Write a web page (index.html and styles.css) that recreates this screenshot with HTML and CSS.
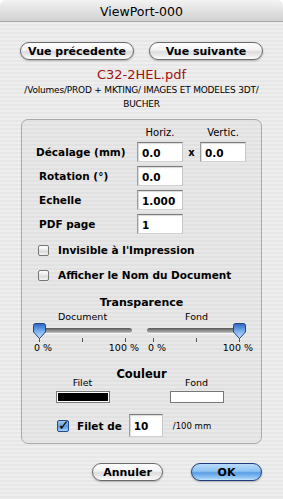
FILE: index.html
```html
<!DOCTYPE html>
<html>
<head>
  <meta name="viewport" content="width=device-width, initial-scale=1">
  <link rel="stylesheet" href="styles.css">
</head>
<body>

<div class="window">
  <div class="titlebar">ViewPort-000</div>

  <div class="panel">
    <div class="nav-buttons">
      <button class="aqua">Vue précedente</button>
      <button class="aqua">Vue suivante</button>
    </div>

    <div class="filename">C32-2HEL.pdf</div>
    <div class="path">/Volumes/PROD + MKTING/ IMAGES ET MODELES 3DT/<br>BUCHER</div>

    <div class="group">
      <div class="fields">
        <span></span><span class="col-head">Horiz.</span><span></span><span class="col-head">Vertic.</span>

        <label class="first">Décalage (mm)</label>
        <input class="field" value="0.0">
        <span class="times">x</span>
        <input class="field" value="0.0">

        <label>Rotation (°)</label>
        <input class="field" value="0.0">
        <span></span><span></span>

        <label>Echelle</label>
        <input class="field" value="1.000">
        <span></span><span></span>

        <label>PDF page</label>
        <input class="field" value="1">
        <span></span><span></span>
      </div>

      <div class="checks">
        <div class="check-row"><span class="box"></span>Invisible à l'Impression</div>
        <div class="check-row"><span class="box"></span>Afficher le Nom du Document</div>
      </div>

      <div class="section-title">Transparence</div>
      <div class="pair">
        <div class="slider">
          <div class="small-label">Document</div>
          <div class="track">
            <svg class="thumb left" width="13" height="17" viewBox="0 0 13 17">
              <defs>
                <linearGradient id="tg1" x1="0" y1="0" x2="0" y2="1">
                  <stop offset="0" stop-color="#2a62c4"/>
                  <stop offset="0.45" stop-color="#6ea6ea"/>
                  <stop offset="1" stop-color="#cde6fb"/>
                </linearGradient>
              </defs>
              <path d="M2.5 0.5 H10.5 Q12.5 0.5 12.5 2.5 V9 L6.5 15.5 L0.5 9 V2.5 Q0.5 0.5 2.5 0.5 Z" fill="url(#tg1)" stroke="#24457e" stroke-width="1"/>
            </svg>
          </div>
          <div class="ticks"><i></i><i></i><i></i></div>
          <div class="ends"><span>0 %</span><span>100 %</span></div>
        </div>
        <div class="slider">
          <div class="small-label">Fond</div>
          <div class="track">
            <svg class="thumb right" width="13" height="17" viewBox="0 0 13 17">
              <path d="M2.5 0.5 H10.5 Q12.5 0.5 12.5 2.5 V9 L6.5 15.5 L0.5 9 V2.5 Q0.5 0.5 2.5 0.5 Z" fill="url(#tg1)" stroke="#24457e" stroke-width="1"/>
            </svg>
          </div>
          <div class="ticks"><i></i><i></i><i></i></div>
          <div class="ends"><span>0 %</span><span>100 %</span></div>
        </div>
      </div>

      <div class="section-title couleur">Couleur</div>
      <div class="pair">
        <div class="swatch-col">
          <div class="small-label">Filet</div>
          <div class="swatch black"></div>
        </div>
        <div class="swatch-col">
          <div class="small-label">Fond</div>
          <div class="swatch white"></div>
        </div>
      </div>

      <div class="filet-row">
        <span class="box checked">&#10003;</span>
        <span class="filet-label">Filet de</span>
        <input class="field wide" value="10">
        <span class="unit">/100 mm</span>
      </div>
    </div>

    <div class="dialog-buttons">
      <button class="aqua">Annuler</button>
      <button class="aqua default">OK</button>
    </div>
  </div>
</div>

</body>
</html>
```

FILE: styles.css
```css
body {
  margin: 0;
  background: #fff;
  font-family: "DejaVu Sans", sans-serif;
  color: #000;
}

.window {
  width: 283px;
  height: 499px;
  border-radius: 6px 6px 0 0;
  overflow: hidden;
  display: flex;
  flex-direction: column;
}

.titlebar {
  height: 22px;
  line-height: 23px;
  text-align: center;
  font-size: 12.5px;
  background: linear-gradient(#f3f3f3, #dedede 60%, #d2d2d2);
  border-bottom: 1px solid #a8a8a8;
  box-sizing: border-box;
}

.panel {
  flex: 1;
  padding: 20px 21px 0 21px;
  background: repeating-linear-gradient(#eeeeee 0, #eeeeee 2px, #e7e7e7 2px, #e7e7e7 4px);
}

/* aqua buttons */
.aqua {
  font-family: "DejaVu Sans", sans-serif;
  font-weight: bold;
  font-size: 11px;
  height: 18px;
  padding: 0;
  border: 1px solid #6a6a6a;
  border-radius: 9px;
  background: linear-gradient(#ffffff, #f2f2f2 45%, #dcdcdc 55%, #f4f4f4 90%, #ffffff);
  box-shadow: 0 1px 2px rgba(0, 0, 0, 0.25);
  color: #000;
}

.aqua.default {
  border-color: #1d3c7c;
  background: linear-gradient(#b9dbfa, #8ec2f2 45%, #5a9ce6 55%, #9ccdf7 90%, #cfe9fd);
}

.nav-buttons {
  display: flex;
  justify-content: space-between;
  margin: 0 -1px;
}

.nav-buttons .aqua {
  width: 114px;
}

.filename {
  margin-top: 7px;
  text-align: center;
  color: #a01010;
  font-size: 13px;
  line-height: 16px;
}

.path {
  margin: 0 -20px;
  text-align: center;
  white-space: nowrap;
  font-size: 9px;
  letter-spacing: -0.2px;
  line-height: 14px;
}

/* group box */
.group {
  margin-top: 8px;
  height: 325px;
  box-sizing: border-box;
  border: 1px solid #a9a9a9;
  border-radius: 7px;
  background: rgba(0, 0, 0, 0.025);
  padding: 6px 0 0 0;
}

.fields {
  display: grid;
  grid-template-columns: 101px 46px 17px 46px;
  row-gap: 4px;
  padding-left: 14px;
  align-items: center;
}

.col-head {
  font-size: 10px;
  text-align: center;
  line-height: 13px;
  margin-bottom: -1px;
}

.fields label {
  font-weight: bold;
  font-size: 10.5px;
  padding-left: 3px;
}

.fields label.first {
  padding-left: 0;
}

.times {
  font-weight: bold;
  font-size: 10px;
  text-align: center;
}

.field {
  box-sizing: border-box;
  width: 46px;
  height: 20px;
  padding: 1px 0 0 4px;
  border: 1px solid #9c9c9c;
  border-top-color: #7b7b7b;
  border-right-color: #c6c6c6;
  border-bottom-color: #d0d0d0;
  box-shadow: inset 1px 1px 1px rgba(0, 0, 0, 0.15);
  background: #fff;
  font-family: "DejaVu Sans", sans-serif;
  font-weight: bold;
  font-size: 10.5px;
  color: #000;
}

.checks {
  margin-top: 9px;
  padding-left: 16px;
  display: flex;
  flex-direction: column;
  gap: 10px;
}

.check-row {
  display: flex;
  align-items: center;
  gap: 9px;
  font-weight: bold;
  font-size: 10.5px;
  line-height: 15px;
}

.box {
  width: 11px;
  height: 11px;
  box-sizing: border-box;
  border: 1px solid #777;
  border-radius: 2px;
  background: linear-gradient(#ffffff, #e6e6e6 50%, #d6d6d6 55%, #f6f6f6);
  flex: none;
}

.box.checked {
  border-color: #244a8c;
  background: linear-gradient(#9cc9f4, #5e9de3 55%, #a5d2f8);
  font-size: 14px;
  line-height: 8px;
  font-weight: bold;
  color: #000;
  overflow: visible;
}

.section-title {
  margin-top: 13px;
  text-align: center;
  font-weight: bold;
  font-size: 11px;
  line-height: 14px;
}

.pair {
  display: flex;
  gap: 15px;
  padding-left: 11px;
}

.slider {
  width: 99px;
}

.small-label {
  font-size: 9.5px;
  text-align: center;
  line-height: 13px;
}

.track {
  position: relative;
  margin-top: 5px;
  height: 5px;
  border-radius: 3px;
  background: linear-gradient(#555, #8a8a8a 50%, #c4c4c4);
  box-shadow: 0 1px 0 rgba(255, 255, 255, 0.8);
}

.thumb {
  position: absolute;
  top: -5px;
}

.thumb.left {
  left: 0;
}

.thumb.right {
  right: 0;
}

.ticks {
  display: flex;
  justify-content: space-between;
  padding: 0 6px;
  margin-top: 5px;
}

.ticks i {
  width: 1px;
  height: 4px;
  background: #555;
}

.ends {
  display: flex;
  justify-content: space-between;
  margin: 0 -7px 0 1px;
  font-size: 9.5px;
  line-height: 12px;
}

.couleur {
  margin-top: 13px;
  font-size: 11.5px;
  margin-bottom: -5px;
}

.swatch-col {
  width: 99px;
  display: flex;
  flex-direction: column;
  align-items: center;
}

.swatch {
  margin-top: 2px;
  width: 54px;
  height: 12px;
  box-sizing: border-box;
  border: 1px solid #777;
}

.swatch.black {
  background: #000;
  box-shadow: inset 0 0 0 1px #fff;
}

.swatch.white {
  background: #fff;
}

.filet-row {
  margin-top: 11px;
  padding-left: 35px;
  display: flex;
  align-items: center;
}

.filet-row .box {
  width: 12px;
  height: 12px;
}

.filet-label {
  margin-left: 8px;
  font-weight: bold;
  font-size: 10.5px;
}

.field.wide {
  width: 34px;
  height: 23px;
  margin-left: 7px;
}

.unit {
  margin-left: 10px;
  font-size: 8.5px;
}

.dialog-buttons {
  margin-top: 19px;
  display: flex;
  justify-content: flex-end;
  gap: 28px;
}

.dialog-buttons .aqua {
  width: 71px;
}
```
